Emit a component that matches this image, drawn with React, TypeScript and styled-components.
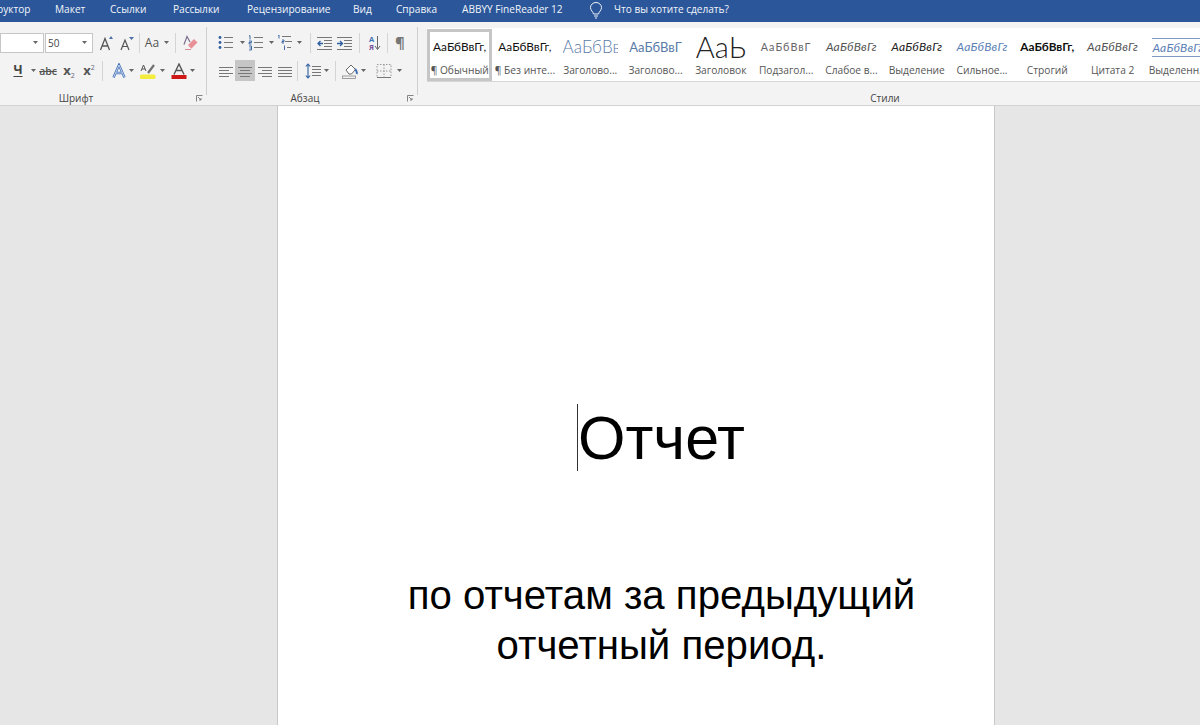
import React from "react";
import styled, { createGlobalStyle } from "styled-components";

const Global = createGlobalStyle`
  html, body { margin: 0; padding: 0; height: 100%; overflow: hidden; background: #e6e6e6; }
  body { font-family: "Open Sans", "Noto Sans", sans-serif; }
  #root { height: 725px; overflow: hidden; }
`;

const Shell = styled.div`
  display: flex; flex-direction: column; width: 1200px; height: 725px; overflow: hidden; background: #e6e6e6;
`;

const TabBar = styled.div`
  display: flex; align-items: center; height: 22px; background: #2b579a; color: #f2f5fa;
  font-size: 10.1px; flex: none; white-space: nowrap; padding-bottom: 5px; box-sizing: border-box;
`;
const Tab = styled.span<{ $w: number; $ml?: number }>`
  width: ${p => p.$w}px; margin-left: ${p => p.$ml ?? 24}px; flex: none;
`;
const Bulb = styled.svg`
  margin: 4px 11px 0 25px; width: 14px; height: 17px; flex: none;
`;

const Ribbon = styled.div`
  display: flex; height: 84px; background: #f3f3f3; border-bottom: 1px solid #d2d2d2;
  box-sizing: border-box; flex: none; color: #444;
`;
const Group = styled.div<{ $w: number; $pt?: number }>`
  position: relative; display: flex; flex-direction: column; width: ${p => p.$w}px; flex: none;
  box-sizing: border-box; padding-top: ${p => p.$pt ?? 10}px;
`;
const Divider = styled.div`
  width: 1px; height: 68px; background: #cfcfcf; margin: 5px 2px 0 0; flex: none;
`;
const Row = styled.div<{ $mt?: number }>`
  display: flex; align-items: center; height: 21px; margin-top: ${p => p.$mt ?? 0}px;
`;
const GroupLabel = styled.div<{ $left?: number; $right?: number }>`
  position: absolute; left: ${p => p.$left ?? 0}px; right: ${p => p.$right ?? 0}px; top: 69px;
  text-align: center; font-size: 10px; line-height: 14px; color: #444;
`;
const Launcher = styled.svg`
  position: absolute; right: 3px; top: 73px; width: 7px; height: 7px;
`;
const Tool = styled.div<{ $w: number; $ml?: number; $active?: boolean }>`
  display: flex; align-items: center; justify-content: center; flex: none; height: 21px;
  width: ${p => p.$w}px; margin-left: ${p => p.$ml ?? 0}px;
  background: ${p => (p.$active ? "#c6c6c6" : "transparent")};
`;
const Sep = styled.div<{ $ml: number; $mr: number }>`
  width: 1px; height: 20px; background: #d4d4d4; flex: none;
  margin-left: ${p => p.$ml}px; margin-right: ${p => p.$mr}px;
`;
const Combo = styled.div<{ $w: number }>`
  display: flex; align-items: center; justify-content: space-between; flex: none; box-sizing: border-box;
  width: ${p => p.$w}px; height: 20px; background: #fff; border: 1px solid #c6c6c6; padding: 0 5px 0 2px;
  font-size: 10px; color: #444; margin-right: 1px;
`;
const AaText = styled.span`
  font-size: 12px; color: #555; margin-right: 5px;
`;

const Gallery = styled.div`
  display: flex; height: 54px; margin: 0 0 0 7px; background: #fff;
  border-bottom: 1px solid #d6d6d6; box-sizing: border-box; overflow: hidden;
`;
const StyleItem = styled.div<{ $selected?: boolean }>`
  display: flex; flex-direction: column; align-items: center; width: 65.3px; height: 52px; flex: none;
  box-sizing: border-box; overflow: hidden; padding: 0 2px; margin-top: 1px; white-space: nowrap;
  border: 3px solid ${p => (p.$selected ? "#c6c6c6" : "transparent")};
`;
const Preview = styled.div<{ $size: number; $color: string; $italic?: boolean; $bold?: boolean; $light?: boolean; $ls?: number }>`
  display: flex; align-items: center; justify-content: safe center; height: 30px; width: 100%; flex: none; overflow: hidden;
  font-family: "Lato", "Open Sans", sans-serif; line-height: 30px;
  font-size: ${p => p.$size}px; color: ${p => p.$color};
  font-style: ${p => (p.$italic ? "italic" : "normal")};
  font-weight: ${p => (p.$bold ? 700 : p.$light ? 300 : 400)};
  letter-spacing: ${p => p.$ls ?? 0}px;
`;
const LinedText = styled.span`
  border-top: 1px solid #7f9ac4; border-bottom: 1px solid #7f9ac4; line-height: 17px;
`;
const StyleLabel = styled.div`
  font-size: 10.2px; line-height: 14px; color: #555; margin-top: 1px;
`;

const Workspace = styled.div`
  flex: 1; display: flex; justify-content: center; background: #e6e6e6; overflow: hidden; padding-left: 72px;
`;
const Page = styled.div`
  width: 718px; height: 800px; flex: none; background: #fff; box-sizing: border-box;
  border-left: 1px solid #c8c8c8; border-right: 1px solid #c8c8c8;
  padding: 296px 71px 0 122px; font-family: "Liberation Sans", Arial, sans-serif; color: #000; text-align: center;
`;
const Title = styled.div`
  font-size: 61px; line-height: 72px; position: relative; display: inline-block;
`;
const Caret = styled.span`
  position: absolute; left: -1px; top: 2px; width: 1px; height: 67px; background: #333;
`;
const Subtitle = styled.div`
  font-size: 40.2px; line-height: 50px; margin-top: 97px; white-space: nowrap;
`;

const Dn = () => (
  <svg width="5" height="3" viewBox="0 0 5 3"><path d="M0 0h5L2.500 3z" fill="#666" /></svg>
);
const CaretTool = ({ w = 7, ml = 0 }: { w?: number; ml?: number }) => (
  <Tool $w={w} $ml={ml}><Dn /></Tool>
);

const I = styled.svg`
  width: 16px; height: 16px; flex: none; display: block;
`;
const LinesIcon = ({ ys, x1 = 1, x2 = 15 }: { ys: [number, number?, number?][]; x1?: number; x2?: number }) => (
  <I viewBox="0 0 16 16">
    {ys.map(([y, a, b], k) => (
      <path key={k} d={`M${a ?? x1} ${y}.5H${b ?? x2}`} stroke="#777" strokeWidth="1" fill="none" />
    ))}
  </I>
);

const Grow = () => (
  <I viewBox="0 0 16 16">
    <path d="M1.500 15L6 3.500 10.500 15M3.200 11h5.600" stroke="#555" strokeWidth="1.300" fill="none" />
    <path d="M10 4l2-3 2 3z" fill="#4d6fa8" />
  </I>
);
const Shrink = () => (
  <I viewBox="0 0 16 16">
    <path d="M2 15l4-10 4 10M3.500 11.500h5" stroke="#555" strokeWidth="1.200" fill="none" />
    <path d="M10 2h5l-2.500 3z" fill="#4d6fa8" />
  </I>
);
const Eraser = () => (
  <I viewBox="0 0 16 16">
    <path d="M6 10l6-6 3.500 3.500-6 6H9z" fill="#e88f97" />
    <path d="M2 9.500L5 1.500 8 7" stroke="#7d6f8f" strokeWidth="1.200" fill="none" />
    <path d="M3 14.500h6" stroke="#d98c94" strokeWidth="1" />
  </I>
);
const UnderlineText = styled.span`
  font-size: 12.5px; font-weight: 700; color: #444; text-decoration: underline; text-underline-offset: 2px; line-height: 1;
`;
const StrikeText = styled.span`
  font-size: 10.5px; color: #555; text-decoration: line-through; font-weight: 600; letter-spacing: -0.1px;
`;
const XBase = styled.span`
  font-size: 13px; font-weight: 700; color: #555; line-height: 1;
`;
const XIdx = styled.span<{ $up?: boolean }>`
  font-size: 7px; color: #667; font-weight: 400; position: relative; top: ${p => (p.$up ? -5 : 3)}px;
`;
const TextEffect = () => (
  <I viewBox="0 0 16 16">
    <path d="M2.500 14.500L8 2l5.500 12.500M4.700 10h6.600" stroke="#4472b8" strokeWidth="2.400" fill="none" />
    <path d="M2.500 14.500L8 2l5.500 12.500M4.700 10h6.600" stroke="#dfe8f5" strokeWidth="0.800" fill="none" />
  </I>
);
const Highlight = () => (
  <I viewBox="0 0 16 16">
    <path d="M8 10l6-8" stroke="#6f6f6f" strokeWidth="2.200" />
    <path d="M1 8l2.500-6L6 8M2 6h3" stroke="#555" strokeWidth="1" fill="none" />
    <rect x="0" y="11.500" width="15.500" height="4.500" rx="1.500" fill="#f3ec3d" />
  </I>
);
const FontColor = () => (
  <I viewBox="0 0 16 16">
    <path d="M3 11.500L8 1l5 10.500M5 7.500h6" stroke="#555" strokeWidth="1.400" fill="none" />
    <rect x="0.500" y="12" width="15" height="4" fill="#d01818" />
  </I>
);
const Bullets = () => (
  <I viewBox="0 0 16 16">
    <path d="M6 2.500h9M6 7.500h9M6 12.500h9" stroke="#777" fill="none" />
    <circle cx="2" cy="2.500" r="1.400" fill="#2f5f9f" />
    <circle cx="2" cy="7.500" r="1.400" fill="#2f5f9f" />
    <circle cx="2" cy="12.500" r="1.400" fill="#2f5f9f" />
  </I>
);
const Numbered = () => (
  <I viewBox="0 0 16 16">
    <path d="M6 2.500h9M6 7.500h9M6 12.500h9" stroke="#777" fill="none" />
    <path d="M1 1l1-.5v4M1 6h2.500v1.500H1v1.500h2.500M1 11h2.500v4H1M1.500 13h2" stroke="#2f5f9f" fill="none" strokeWidth="0.900" />
  </I>
);
const Multi = () => (
  <I viewBox="0 0 16 16">
    <path d="M5 1.500h9M8 6.500h7M10 12.500h4" stroke="#777" fill="none" />
    <path d="M1 0.500l1-.5v3.500M5 5h2v1.500H5V8h2M7.500 10.500V15" stroke="#2f5f9f" fill="none" strokeWidth="0.900" />
  </I>
);
const Outdent = () => (
  <I viewBox="0 0 16 16">
    <path d="M0 2.500h15M7 5.500h8M7 8.500h8M7 11.500h8M0 14.500h15" stroke="#777" fill="none" />
    <path d="M1 8.500h5M3.500 6L1 8.500 3.500 11" stroke="#2f5f9f" strokeWidth="1.300" fill="none" />
  </I>
);
const Indent = () => (
  <I viewBox="0 0 16 16">
    <path d="M0 2.500h15M7 5.500h8M7 8.500h8M7 11.500h8M0 14.500h15" stroke="#777" fill="none" />
    <path d="M0 8.500h5M3 6l2.500 2.500L3 11" stroke="#2f5f9f" strokeWidth="1.300" fill="none" />
  </I>
);
const SortLetters = styled.span`
  display: flex; flex-direction: column; font-size: 7.5px; line-height: 8px; font-weight: 700; text-align: center;
`;
const SortA = styled.span` color: #3f6fb3; `;
const SortY = styled.span` color: #7a4f99; `;
const SortArrow = () => (
  <svg width="7" height="16" viewBox="0 0 7 16">
    <path d="M3.500 1v13M1 11l2.500 3.500L6 11" stroke="#666" fill="none" />
  </svg>
);
const PilcrowText = styled.span`
  font-size: 15px; font-weight: 700; color: #777; line-height: 1;
`;
const Spacing = () => (
  <I viewBox="0 0 16 16">
    <path d="M7 3.500h9M7 6.500h9M7 9.500h9M7 12.500h9" stroke="#777" fill="none" />
    <path d="M3 1v14M0.800 3.500L3 1l2.200 2.500M0.800 12.500L3 15l2.200-2.500" stroke="#2f5f9f" fill="none" strokeWidth="1.100" />
  </I>
);
const Fill = () => (
  <I viewBox="0 0 16 16">
    <path d="M4 7l5-5 4.500 4.500-4 4.500H7z" fill="#fff" stroke="#666" />
    <path d="M13 6c2 2 2 4 1.500 5" stroke="#3f6fb3" strokeWidth="2" fill="none" />
    <rect x="0.500" y="13" width="13" height="2.500" fill="#f3f3f3" stroke="#888" strokeWidth="0.800" />
  </I>
);
const Borders = () => (
  <I viewBox="0 0 16 16">
    <path d="M1 1.500h14v13H1zM8 1.500v13M1 8h14" stroke="#999" strokeDasharray="1.500 1.500" fill="none" />
    <path d="M1 14.500h14" stroke="#777" />
  </I>
);
const LauncherIcon = () => (
  <Launcher viewBox="0 0 7 7">
    <path d="M0.500 6.500v-6h6M2 2l3 3M5 3v2H3" stroke="#777" fill="none" strokeWidth="0.900" />
  </Launcher>
);

type StyleEntry = { t: string; l: string; s: number; c: string; sel?: boolean; i?: boolean; b?: boolean; thin?: boolean; ls?: number; lined?: boolean };
const styles: StyleEntry[] = [
  { t: "АаБбВвГг,", l: "¶ Обычный", s: 11.8, c: "#111", sel: true },
  { t: "АаБбВвГг,", l: "¶ Без инте...", s: 11.8, c: "#111" },
  { t: "АаБбВвГг", l: "Заголово...", s: 17, c: "#5a7ba8", thin: true },
  { t: "АаБбВвГ", l: "Заголово...", s: 13, c: "#5a7ba8" },
  { t: "АаЬ", l: "Заголовок", s: 29, c: "#222", thin: true },
  { t: "АаБбВвГ", l: "Подзагол...", s: 10.8, c: "#666", ls: 1 },
  { t: "АаБбВвГг", l: "Слабое в...", s: 12, c: "#555", i: true, ls: 0.2 },
  { t: "АаБбВвГг", l: "Выделение", s: 12, c: "#222", i: true, ls: 0.2 },
  { t: "АаБбВвГг", l: "Сильное...", s: 12, c: "#5b7fb5", i: true, ls: 0.2 },
  { t: "АаБбВвГг,", l: "Строгий", s: 11.8, c: "#111", b: true },
  { t: "АаБбВвГг", l: "Цитата 2", s: 12, c: "#555", i: true, ls: 0.2 },
  { t: "АаБбВвГг", l: "Выделенн...", s: 12, c: "#5b7fb5", i: true, ls: 0.2, lined: true },
];

export default function App() {
  return (
    <Shell>
      <Global />
      <TabBar>
        <Tab $w={34} $ml={-3}>руктор</Tab>
        <Tab $w={31}>Макет</Tab>
        <Tab $w={39}>Ссылки</Tab>
        <Tab $w={50}>Рассылки</Tab>
        <Tab $w={82}>Рецензирование</Tab>
        <Tab $w={19}>Вид</Tab>
        <Tab $w={42}>Справка</Tab>
        <Tab $w={102}>ABBYY FineReader 12</Tab>
        <Bulb viewBox="0 0 14 17">
          <path d="M4.500 12C4 9.500 1.500 8.500 1.500 5.500a5.500 5 0 0 1 11 0C12.500 8.500 10 9.500 9.500 12zM5 14h4M6 16h2" stroke="#eef2f8" strokeWidth="1" fill="none" />
        </Bulb>
        <Tab $w={115} $ml={0}>Что вы хотите сделать?</Tab>
      </TabBar>

      <Ribbon>
        <Group $w={206}>
          <Row>
            <Combo $w={44}><span /><Dn /></Combo>
            <Combo $w={48}>50<Dn /></Combo>
            <Tool $w={16} $ml={5}><Grow /></Tool>
            <Tool $w={16} $ml={4}><Shrink /></Tool>
            <Sep $ml={4} $mr={4} />
            <Tool $w={26}><AaText>Aa</AaText><Dn /></Tool>
            <Sep $ml={5} $mr={6} />
            <Tool $w={16}><Eraser /></Tool>
          </Row>
          <Row $mt={7}>
            <Tool $w={16} $ml={10}><UnderlineText>Ч</UnderlineText></Tool>
            <CaretTool ml={4} />
            <Tool $w={18} $ml={2}><StrikeText>abc</StrikeText></Tool>
            <Tool $w={16} $ml={4}><XBase>x<XIdx>2</XIdx></XBase></Tool>
            <Tool $w={16} $ml={4}><XBase>x<XIdx $up>2</XIdx></XBase></Tool>
            <Sep $ml={5} $mr={8} />
            <Tool $w={16}><TextEffect /></Tool>
            <CaretTool ml={1} />
            <Tool $w={16} $ml={5}><Highlight /></Tool>
            <CaretTool ml={3} />
            <Tool $w={16} $ml={5}><FontColor /></Tool>
            <CaretTool ml={2} />
          </Row>
          <GroupLabel $right={54}>Шрифт</GroupLabel>
          <LauncherIcon />
        </Group>
        <Divider />
        <Group $w={208}>
          <Row>
            <Tool $w={16} $ml={9}><Bullets /></Tool>
            <CaretTool ml={5} />
            <Tool $w={16} $ml={2}><Numbered /></Tool>
            <CaretTool ml={4} />
            <Tool $w={16} $ml={2}><Multi /></Tool>
            <CaretTool ml={3} />
            <Sep $ml={7} $mr={6} />
            <Tool $w={16}><Outdent /></Tool>
            <Tool $w={16} $ml={4}><Indent /></Tool>
            <Sep $ml={6} $mr={7} />
            <Tool $w={16}><SortLetters><SortA>А</SortA><SortY>Я</SortY></SortLetters><SortArrow /></Tool>
            <Sep $ml={4} $mr={6} />
            <Tool $w={12}><PilcrowText>¶</PilcrowText></Tool>
          </Row>
          <Row $mt={7}>
            <Tool $w={16} $ml={9}><LinesIcon ys={[[4, 1, 15], [7, 1, 11], [10, 1, 15], [13, 1, 11]]} /></Tool>
            <Tool $w={20} $ml={1} $active><LinesIcon ys={[[4, 1, 15], [7, 3, 13], [10, 1, 15], [13, 3, 13]]} /></Tool>
            <Tool $w={16} $ml={2}><LinesIcon ys={[[4, 1, 15], [7, 5, 15], [10, 1, 15], [13, 5, 15]]} /></Tool>
            <Tool $w={16} $ml={4}><LinesIcon ys={[[4], [7], [10], [13]]} /></Tool>
            <Sep $ml={4} $mr={7} />
            <Tool $w={16}><Spacing /></Tool>
            <CaretTool ml={2} />
            <Sep $ml={5} $mr={5} />
            <Tool $w={17}><Fill /></Tool>
            <CaretTool ml={2} />
            <Tool $w={16} $ml={9}><Borders /></Tool>
            <CaretTool ml={4} />
          </Row>
          <GroupLabel $right={16}>Абзац</GroupLabel>
          <LauncherIcon />
        </Group>
        <Divider />
        <Group $w={782} $pt={6}>
          <Gallery>
            {styles.map((s, k) => (
              <StyleItem key={k} $selected={s.sel}>
                <Preview $size={s.s} $color={s.c} $italic={s.i} $bold={s.b} $light={s.thin} $ls={s.ls}>
                  {s.lined ? <LinedText>{s.t}</LinedText> : s.t}
                </Preview>
                <StyleLabel>{s.l}</StyleLabel>
              </StyleItem>
            ))}
          </Gallery>
          <GroupLabel $left={148}>Стили</GroupLabel>
        </Group>
      </Ribbon>

      <Workspace>
        <Page>
          <Title><Caret />Отчет</Title>
          <Subtitle>по отчетам за предыдущий<br />отчетный период.</Subtitle>
        </Page>
      </Workspace>
    </Shell>
  );
}
